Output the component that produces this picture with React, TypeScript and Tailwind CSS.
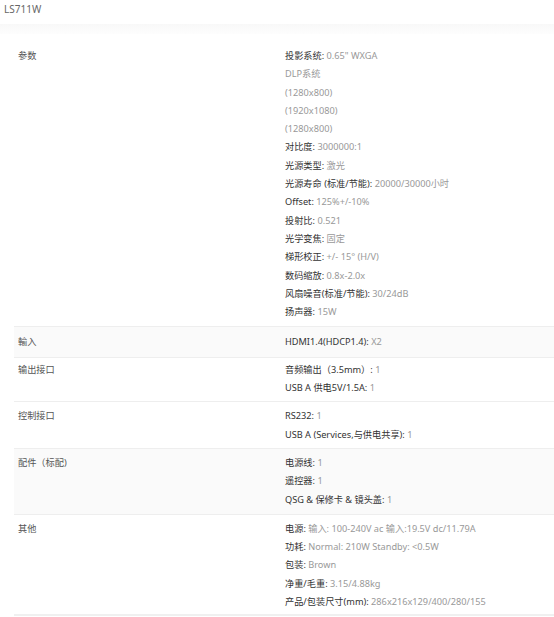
type Item = { k?: string; v: string };
type Row = { label: string; items: Item[]; shaded?: boolean; pad: string };

const rows: Row[] = [
  {
    label: "参数",
    pad: "pt-[9px] pb-[5px]",
    items: [
      { k: "投影系统", v: "0.65\" WXGA" },
      { v: "DLP系统" },
      { v: "(1280x800)" },
      { v: "(1920x1080)" },
      { v: "(1280x800)" },
      { k: "对比度", v: "3000000:1" },
      { k: "光源类型", v: "激光" },
      { k: "光源寿命 (标准/节能)", v: "20000/30000小时" },
      { k: "Offset", v: "125%+/-10%" },
      { k: "投射比", v: "0.521" },
      { k: "光学变焦", v: "固定" },
      { k: "梯形校正", v: "+/- 15° (H/V)" },
      { k: "数码缩放", v: "0.8x-2.0x" },
      { k: "风扇噪音(标准/节能)", v: "30/24dB" },
      { k: "扬声器", v: "15W" },
    ],
  },
  { label: "輸入", shaded: true, pad: "pt-[6px] pb-[5px]", items: [{ k: "HDMI1.4(HDCP1.4)", v: "X2" }] },
  {
    label: "输出接口",
    pad: "pt-[3px] pb-[4px]",
    items: [
      { k: "音频输出（3.5mm）", v: "1" },
      { k: "USB A 供电5V/1.5A", v: "1" },
    ],
  },
  {
    label: "控制接口",
    pad: "pt-[5px] pb-[4px]",
    items: [
      { k: "RS232", v: "1" },
      { k: "USB A (Services,与供电共享)", v: "1" },
    ],
  },
  {
    label: "配件（标配)",
    shaded: true,
    pad: "pt-[5px] pb-[5px]",
    items: [
      { k: "电源线", v: "1" },
      { k: "遥控器", v: "1" },
      { k: "QSG & 保修卡 & 镜头盖", v: "1" },
    ],
  },
  {
    label: "其他",
    pad: "pt-[5px] pb-[3px]",
    items: [
      { k: "电源", v: "输入: 100-240V ac 输入:19.5V dc/11.79A" },
      { k: "功耗", v: "Normal: 210W Standby: <0.5W" },
      { k: "包装", v: "Brown" },
      { k: "净重/毛重", v: "3.15/4.88kg" },
      { k: "产品/包装尺寸(mm)", v: "286x216x129/400/280/155" },
    ],
  },
];

export default function App() {
  return (
    <div
      className="w-[554px] h-[617px] overflow-hidden bg-white text-[9.2px]"
      style={{ fontFamily: '"Noto Sans", "Noto Sans CJK SC", sans-serif' }}
    >
      {/* Title */}
      <div className="h-[24px] pl-[4px] pt-[1px] text-[10px] text-[#666] leading-[16px]">LS711W</div>
      <div className="h-[10px] bg-gradient-to-b from-[#f8f8f8] to-[#fdfdfd]" />

      {/* Spec table */}
      <div className="ml-[14px] mt-[4px] border-b-2 border-[#f0f0f0]">
        {rows.map((row, i) => (
          <div
            key={row.label}
            className={
              "flex px-[4px] " +
              row.pad +
              " " +
              (i > 0 ? "border-t border-[#eeeeee] " : "") +
              (row.shaded ? "bg-[#fafafa]" : "bg-white")
            }
          >
            <div className="w-[267px] shrink-0 leading-[18.3px] text-[#555]">{row.label}</div>
            <div className="flex-1 leading-[18.3px]">
              {row.items.map((it, j) => (
                <div key={j} className="whitespace-nowrap">
                  {it.k ? (
                    <>
                      <span className="text-[#333]">{it.k}:</span>{" "}
                      <span className="text-[#999]">{it.v}</span>
                    </>
                  ) : (
                    <span className="text-[#999]">{it.v}</span>
                  )}
                </div>
              ))}
            </div>
          </div>
        ))}
      </div>
    </div>
  );
}
